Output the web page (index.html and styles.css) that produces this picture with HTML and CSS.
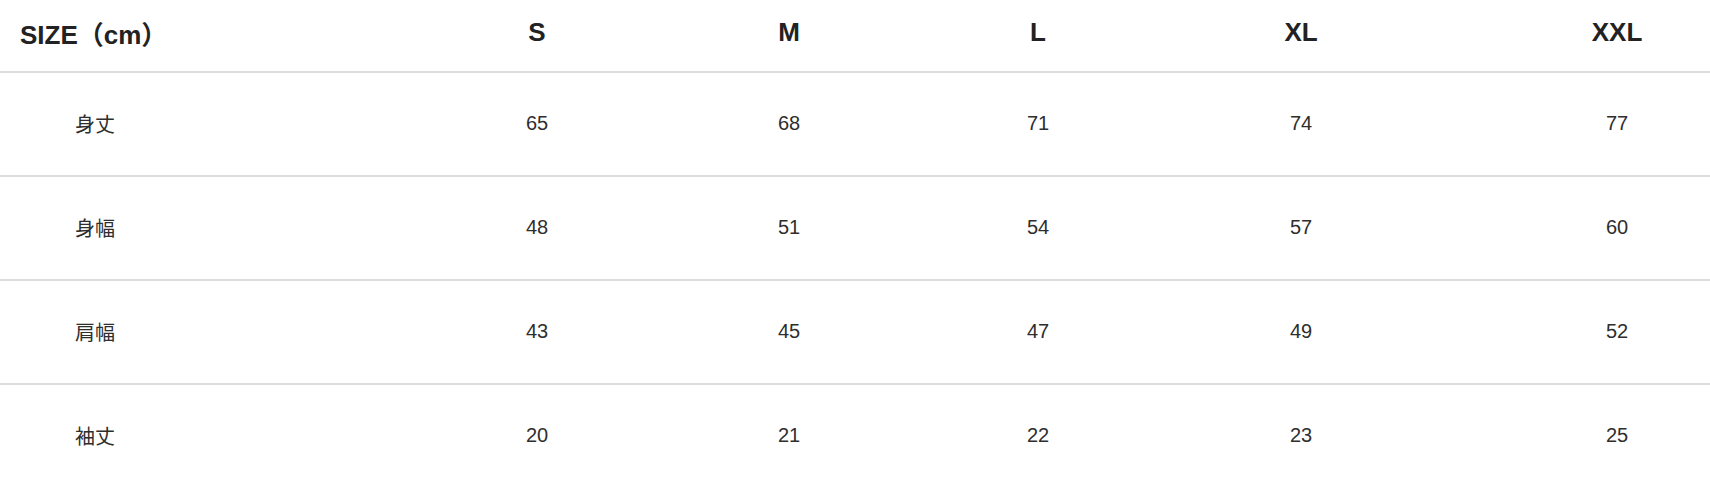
FILE: index.html
```html
<!DOCTYPE html>
<html lang="ja">
<head>
<meta charset="utf-8">
<title>SIZE</title>
<link rel="stylesheet" href="styles.css">
</head>
<body>
<table class="size-table">
  <colgroup>
    <col class="c0"><col class="c1"><col class="c2"><col class="c3"><col class="c4"><col class="c5">
  </colgroup>
  <thead>
    <tr>
      <th class="label-head">SIZE（cm）</th>
      <th>S</th><th>M</th><th>L</th><th>XL</th><th>XXL</th>
    </tr>
  </thead>
  <tbody>
    <tr><td class="label">身丈</td><td>65</td><td>68</td><td>71</td><td>74</td><td>77</td></tr>
    <tr><td class="label">身幅</td><td>48</td><td>51</td><td>54</td><td>57</td><td>60</td></tr>
    <tr><td class="label">肩幅</td><td>43</td><td>45</td><td>47</td><td>49</td><td>52</td></tr>
    <tr class="last"><td class="label">袖丈</td><td>20</td><td>21</td><td>22</td><td>23</td><td>25</td></tr>
  </tbody>
</table>
</body>
</html>
```

FILE: styles.css
```css
html, body {
  margin: 0;
  padding: 0;
  background: #ffffff;
}

body {
  font-family: "Liberation Sans", Arial, "Noto Sans CJK JP", sans-serif;
  color: #222;
}

.size-table {
  width: 1710px;
  border-collapse: collapse;
  table-layout: fixed;
}

.c0 { width: 494px; }
.c1 { width: 86px; }
.c2 { width: 418px; }
.c3 { width: 80px; }
.c4 { width: 446px; }
.c5 { width: 186px; }

.size-table th {
  height: 65px;
  padding: 0 0 6px 0;
  font-size: 26px;
  font-weight: bold;
  color: #222;
  text-align: center;
  vertical-align: middle;
  border-bottom: 2px solid #dcdcdc;
  white-space: nowrap;
  overflow: visible;
}

.size-table th.label-head {
  text-align: left;
  padding-left: 20px;
}

.size-table td {
  height: 100px;
  padding: 0 0 2px 0;
  font-size: 20px;
  color: #2e2e2e;
  text-align: center;
  vertical-align: middle;
  border-bottom: 2px solid #dcdcdc;
  white-space: nowrap;
}

.size-table tr.last td {
  border-bottom: none;
}

.size-table td.label {
  text-align: left;
  padding-left: 75px;
}
```
